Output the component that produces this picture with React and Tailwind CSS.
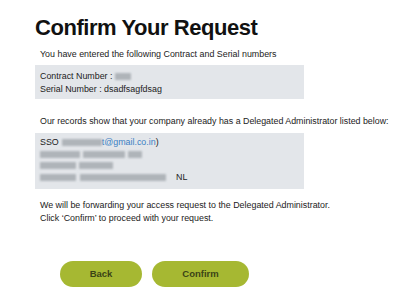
export default function App() {
  const blur = "inline-block h-[7px] bg-[#a3a8ae] blur-[1.2px] opacity-80 align-middle";
  return (
    <div className="w-[400px] h-[292px] bg-white overflow-hidden" style={{ fontFamily: '"Liberation Sans", Arial, sans-serif' }}>
      <div className="pl-[35px] pt-[14px]">
        <h1 className="text-[22px] leading-[28px] font-bold text-[#111] tracking-[-0.45px]">Confirm Your Request</h1>
        <p className="pl-[5px] mt-[6px] text-[8.9px] leading-[13px] text-[#222]">You have entered the following Contract and Serial numbers</p>
        <div className="mt-[4px] w-[269px] h-[34px] bg-[#e3e6ea] px-[5px] pt-[5px] text-[8.9px] leading-[13px] text-[#222]">
          <div>Contract Number : <span className={`${blur} w-[16px] h-[6px]`} /></div>
          <div>Serial Number : dsadfsagfdsag</div>
        </div>
        <p className="pl-[5px] mt-[16px] text-[8.85px] leading-[13px] text-[#222]">Our records show that your company already has a Delegated Administrator listed below:</p>
        <div className="mt-[5px] w-[269px] h-[56px] bg-[#e3e6ea] px-[5px] pt-[4px] text-[8.9px] leading-[11.5px] text-[#222]">
          <div className="flex items-center">
            <span>SSO</span>
            <span className={`${blur} ml-[3px] w-[40px]`} />
            <span className="text-[#3b7fc4]">t@gmail.co.in</span>
            <span>)</span>
          </div>
          <div className="flex items-center h-[11.5px] gap-[3px]">
            <span className={`${blur} w-[40px]`} />
            <span className={`${blur} w-[42px]`} />
            <span className={`${blur} w-[14px]`} />
          </div>
          <div className="flex items-center h-[11.5px] gap-[3px]">
            <span className={`${blur} w-[36px]`} />
            <span className={`${blur} w-[34px]`} />
          </div>
          <div className="flex items-center h-[11.5px] gap-[4px]">
            <span className={`${blur} w-[36px]`} />
            <span className={`${blur} w-[86px]`} />
            <span className="ml-[6px]">NL</span>
          </div>
        </div>
        <p className="pl-[5px] mt-[10px] text-[8.9px] leading-[13px] text-[#222]">
          We will be forwarding your access request to the Delegated Administrator.<br />
          Click ‘Confirm’ to proceed with your request.
        </p>
        <div className="flex gap-[10px] pl-[25px] mt-[36px]">
          <button className="w-[82px] h-[26px] rounded-full bg-[#a6b832] text-[#3b4416] text-[9.5px] font-bold">Back</button>
          <button className="w-[97px] h-[26px] rounded-full bg-[#a6b832] text-[#3b4416] text-[9.5px] font-bold">Confirm</button>
        </div>
      </div>
    </div>
  );
}
